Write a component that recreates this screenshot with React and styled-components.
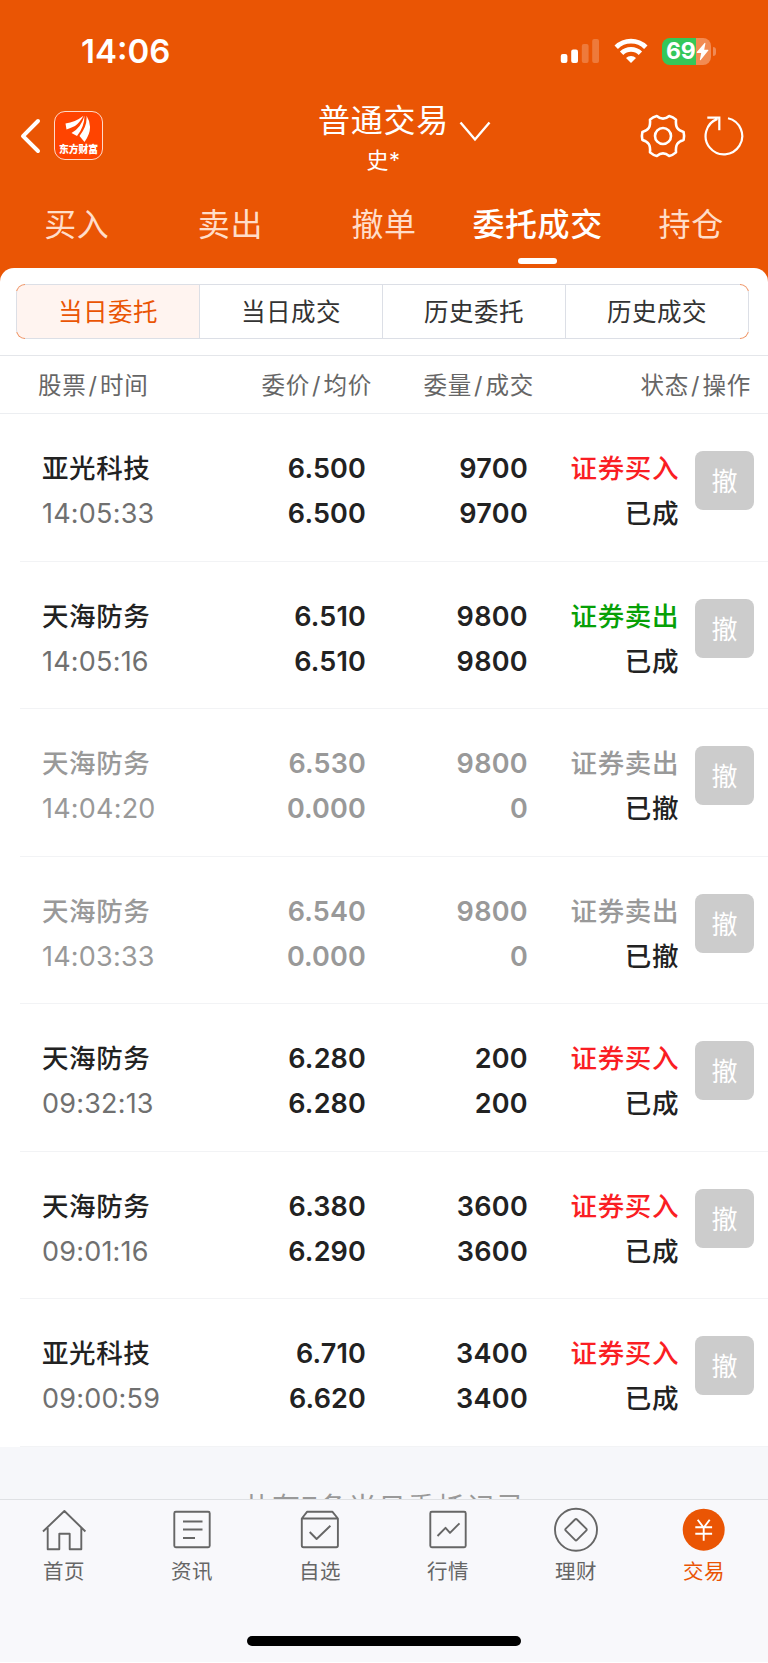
import styled, { createGlobalStyle } from "styled-components";

const orders = [
    { name: "亚光科技", time: "14:05:33", price: "6.500", avg: "6.500", qty: "9700", deal: "9700", side: "buy", status: "已成" },
    { name: "天海防务", time: "14:05:16", price: "6.510", avg: "6.510", qty: "9800", deal: "9800", side: "sell", status: "已成" },
    { name: "天海防务", time: "14:04:20", price: "6.530", avg: "0.000", qty: "9800", deal: "0", side: "sell", status: "已撤", canceled: true },
    { name: "天海防务", time: "14:03:33", price: "6.540", avg: "0.000", qty: "9800", deal: "0", side: "sell", status: "已撤", canceled: true },
    { name: "天海防务", time: "09:32:13", price: "6.280", avg: "6.280", qty: "200", deal: "200", side: "buy", status: "已成" },
    { name: "天海防务", time: "09:01:16", price: "6.380", avg: "6.290", qty: "3600", deal: "3600", side: "buy", status: "已成" },
    { name: "亚光科技", time: "09:00:59", price: "6.710", avg: "6.620", qty: "3400", deal: "3400", side: "buy", status: "已成" },
];

const tabs = ["买入", "卖出", "撤单", "委托成交", "持仓"];
const segments = ["当日委托", "当日成交", "历史委托", "历史成交"];
const columns = [
    ["股票", "时间"],
    ["委价", "均价"],
    ["委量", "成交"],
    ["状态", "操作"],
];

const navItems = [
    {
        label: "首页",
        icon: <path d="M3 25.5 24.4 5l21 20.5M7.7 22v21.3h11.6V27.7h10.4v15.6h11.6V22" />,
    },
    {
        label: "资讯",
        icon: <><rect x="6.3" y="5.8" width="35.4" height="35.4" rx="1.5" /><path d="M15 15.5h19.5M15 23.5h19.5M15 32h12" /></>,
    },
    {
        label: "自选",
        icon: <><path d="M5.8 12.5 11 5.8h25.5l5.4 6.7v27q0 1.7-1.7 1.7H7.5q-1.7 0-1.7-1.7zM5.8 12.5h36" /><path d="m13.7 26 6.9 7 13.8-13.3" /></>,
    },
    {
        label: "行情",
        icon: <><rect x="6.3" y="5.8" width="35.4" height="35.4" rx="1.5" /><path d="m13.5 30 8-8.2 4.5 5.1 9.5-9.6" /></>,
    },
    {
        label: "理财",
        icon: <><circle cx="24" cy="23.7" r="21" /><path d="M23 13.5q1-1 2 0l9.2 9.2q1 1 0 2L25 33.9q-1 1-2 0l-9.2-9.2q-1-1 0-2z" /></>,
    },
    {
        label: "交易",
        active: true,
        icon: <><circle cx="23.7" cy="23.7" r="21" fill="#ea5504" stroke="none" /><path stroke="#fff" d="m17.7 13.7 6 8 6-8M15.3 21.2h16.8M15.3 27.8h16.8M23.7 21.5v13.3" /></>,
    },
];

function Row({ order }) {
    return (
        <OrderRow $canceled={order.canceled}>
            <Cell $left>
                <strong>{order.name}</strong>
                <Time $canceled={order.canceled}>{order.time}</Time>
            </Cell>
            <Cell $num $spacing="0.15px">
                <strong>{order.price}</strong>
                <strong>{order.avg}</strong>
            </Cell>
            <Cell $num $spacing="0.3px">
                <strong>{order.qty}</strong>
                <strong>{order.deal}</strong>
            </Cell>
            <Cell>
                <Side $side={order.side} $canceled={order.canceled}>
                    {order.side === "buy" ? "证券买入" : "证券卖出"}
                </Side>
                <Status>{order.status}</Status>
            </Cell>
            <CancelButton>撤</CancelButton>
        </OrderRow>
    );
}

function StatusIcons() {
    return (
        <StatusRight>
            <svg width="40" height="26" viewBox="0 0 40 26" fill="#fff">
                <rect x="0.8" y="16" width="6.6" height="9" rx="2" />
                <rect x="11.2" y="11.4" width="6.8" height="13.6" rx="2" />
                <rect x="21.8" y="6" width="6.8" height="19" rx="2" opacity="0.22" />
                <rect x="32.2" y="1" width="6.8" height="24" rx="2" opacity="0.22" />
            </svg>
            <svg width="34" height="26" viewBox="0 0 34 26" fill="none" stroke="#fff" strokeWidth="4.8">
                <path d="M2.2 9.2a21 21 0 0 1 29.6 0" />
                <path d="M7.6 15.2a13.4 13.4 0 0 1 18.8 0" />
                <path d="m12 20 5 5 5-5a7 7 0 0 0-10 0z" fill="#fff" stroke="none" />
            </svg>
            <Battery>
                <BatteryBody>
                    69
                    <svg width="13" height="19" viewBox="0 0 13 18" fill="#fff">
                        <path d="M8.6 0.4 0.8 9.6q-.5.8.4.8h4L3.9 17q0 1 .8.4l7.6-9.3q.5-.9-.4-.9H8.2L9.4.9q0-1-.8-.5z" />
                    </svg>
                </BatteryBody>
                <BatteryTip />
            </Battery>
        </StatusRight>
    );
}

export default function App() {
    return (
        <Page>
            <GlobalStyle />
            <Header>
                <StatusBar>
                    <Clock>14:06</Clock>
                    <StatusIcons />
                </StatusBar>
                <TitleBar>
                    <HeaderSide>
                        <svg width="22" height="36" viewBox="0 0 22 36" fill="none" stroke="#fff" strokeWidth="4" strokeLinecap="round" strokeLinejoin="round">
                            <path d="M18 3 3 18.2 18 33" />
                        </svg>
                        <Logo>
                            <svg width="27" height="28" viewBox="0 0 27 28" fill="#fff">
                                <path d="M.5 8.500Q10 7.500 18.500.8 14.500 8 10 11 5 13 1.500 14.500z" />
                                <path d="M19.500.8Q16 13 6.500 18l5.500 3Q19.500 12 19.500.8z" />
                                <path d="M21.500.8Q22.500 11 14.500 21l5 6Q29.500 13 21.500.8z" />
                            </svg>
                            <span>东方财富</span>
                        </Logo>
                    </HeaderSide>
                    <Title>
                        <h1>普通交易</h1>
                        <p>史*</p>
                    </Title>
                    <Chevron width="32" height="22" viewBox="0 0 32 22" fill="none" stroke="#fff" strokeWidth="2.400">
                        <path d="m1.500 1.500 14.500 17 14.500-17" />
                    </Chevron>
                    <HeaderSide>
                        <svg width="46" height="46" viewBox="0 0 46 46" fill="none" stroke="#fff" strokeWidth="2.600" strokeLinejoin="round">
                            <path d="M16.800 3q6.200 5.400 12.400 0c2.500.6 4.800 1.800 6.800 3.600-.6 7.500 1.200 10.600 7.600 12.400q1 4 0 8c-6.400 1.800-8.200 4.900-7.600 12.400-2 1.800-4.300 3-6.800 3.600q-6.200-5.400-12.400 0c-2.500-.6-4.800-1.800-6.800-3.600.6-7.500-1.200-10.600-7.600-12.400q-1-4 0-8c6.400-1.800 8.200-4.900 7.600-12.400 2-1.800 4.300-3 6.800-3.600z" />
                            <circle cx="23" cy="23" r="8" />
                        </svg>
                        <svg width="42" height="42" viewBox="0 0 42 42" fill="none" stroke="#fff" strokeWidth="2.200">
                            <path d="M25 3.200A18.300 18.300 0 1 1 14.500 3.900M4.300 2.700h12v12.500" />
                        </svg>
                    </HeaderSide>
                </TitleBar>
                <Tabs>
                    {tabs.map((t) => (
                        <Tab key={t} $active={t === "委托成交"}>{t}</Tab>
                    ))}
                </Tabs>
            </Header>
            <Panel>
                <Segment>
                    {segments.map((s, i) => (
                        <SegmentItem key={s} $active={i === 0}>{s}</SegmentItem>
                    ))}
                </Segment>
                <TableHead>
                    {columns.map(([a, b]) => (
                        <span key={a}>{a}<i>/</i>{b}</span>
                    ))}
                </TableHead>
                {orders.map((o) => (
                    <Row key={o.time} order={o} />
                ))}
            </Panel>
            <Summary>共有7条当日委托记录</Summary>
            <BottomNav>
                <NavList>
                    {navItems.map((n) => (
                        <NavItem key={n.label} $active={n.active}>
                            <svg width="48" height="48" viewBox="0 0 48 48" fill="none" stroke="#666" strokeWidth="1.900" strokeLinejoin="round">
                                {n.icon}
                            </svg>
                            {n.label}
                        </NavItem>
                    ))}
                </NavList>
                <HomeIndicator />
            </BottomNav>
        </Page>
    );
}

const GlobalStyle = createGlobalStyle`
    * {
        box-sizing: border-box;
    }

    body {
        margin: 0;
        background: #fff;
        font-family: Inter, "Noto Sans CJK SC", sans-serif;
    }
`;

const Page = styled.div`
    width: 768px;
    height: 1663px;
    display: flex;
    flex-direction: column;
    overflow: hidden;
`;

const Header = styled.header`
    height: 284px;
    flex: none;
    margin-bottom: -16px;
    background: #ea5504;
    color: #fff;
`;

const StatusBar = styled.div`
    height: 102px;
    padding: 0 52px 0 81px;
    display: flex;
    justify-content: space-between;
    align-items: center;
`;

const Clock = styled.div`
    font-size: 33px;
    font-weight: 600;
`;

const StatusRight = styled.div`
    display: flex;
    align-items: center;
    gap: 14px;
`;

const Battery = styled.div`
    display: flex;
    align-items: center;
    gap: 2px;
`;

const BatteryBody = styled.div`
    width: 49px;
    height: 27px;
    padding-left: 4px;
    display: flex;
    align-items: center;
    gap: 1px;
    border-radius: 8px;
    background: linear-gradient(to right, #34c759 34px, #f28b52 34px);
    font-size: 23px;
    font-weight: 700;
    letter-spacing: -0.3px;

    svg {
        flex: none;
    }
`;

const BatteryTip = styled.div`
    width: 3px;
    height: 9px;
    border-radius: 0 4px 4px 0;
    background: #f08a55;
`;

const TitleBar = styled.div`
    height: 68px;
    padding: 0 22px 0 20px;
    display: grid;
    grid-template-columns: 1fr auto 1fr;
    align-items: center;
    position: relative;
`;

const HeaderSide = styled.div`
    display: flex;
    align-items: center;
    gap: 12px;
    padding-bottom: 7px;

    &:last-child {
        justify-content: flex-end;
        gap: 17px;
        padding-right: 1px;
        padding-bottom: 6px;
    }
`;

const Logo = styled.div`
    width: 49px;
    height: 49px;
    display: flex;
    flex-direction: column;
    align-items: center;
    padding-top: 3px;
    border: 1px solid #ffd9c8;
    border-radius: 11px;
    background: #ff4400;

    span {
        font-family: "Noto Sans CJK SC", sans-serif;
        font-size: 9.800px;
        font-weight: 900;
        line-height: 13px;
    }
`;

const Title = styled.div`
    padding: 0 0 1px 1px;
    text-align: center;

    h1 {
        margin: 0;
        font-size: 32px;
        font-weight: 400;
        line-height: 38px;
        letter-spacing: 0.800px;
    }

    p {
        margin: 5px 0 0;
        font-size: 22px;
        line-height: 30px;
        letter-spacing: 0.500px;
    }
`;

const Chevron = styled.svg`
    position: absolute;
    left: 459px;
    top: 19px;
`;

const Tabs = styled.nav`
    height: 98px;
    display: grid;
    grid-template-columns: repeat(5, 1fr);
`;

const Tab = styled.div`
    display: flex;
    flex-direction: column;
    align-items: center;
    padding-top: 32px;
    font-size: 32px;
    line-height: 46px;
    letter-spacing: 0.600px;
    font-weight: ${(p) => (p.$active ? 500 : 400)};
    color: ${(p) => (p.$active ? "#fff" : "#ffddc9")};

    &::after {
        content: "";
        width: 39px;
        height: 6px;
        margin-top: 10px;
        border-radius: 3px;
        background: ${(p) => (p.$active ? "#fff" : "transparent")};
    }
`;

const Panel = styled.main`
    flex: none;
    padding-top: 16px;
    border-radius: 14px 14px 0 0;
    background: #fff;
`;

/* grey edges, orange only in the rounded corners */
const Segment = styled.div`
    height: 55px;
    margin: 0 19px 16px 16px;
    display: grid;
    grid-template-columns: 182px 183px 183px 1fr;
    border: 1px solid transparent;
    border-radius: 9px;
    overflow: hidden;
    background:
        linear-gradient(#dcdfe6, #dcdfe6) center / calc(100% - 18px) 100% no-repeat border-box,
        linear-gradient(#dcdfe6, #dcdfe6) center / 100% calc(100% - 14px) no-repeat border-box,
        linear-gradient(#ee8f5e, #ee8f5e) border-box;
`;

const SegmentItem = styled.div`
    display: flex;
    align-items: center;
    justify-content: center;
    padding-bottom: 2px;
    font-size: 24.500px;
    letter-spacing: 0.500px;
    color: ${(p) => (p.$active ? "#ea5504" : "#333")};
    background: ${(p) => (p.$active ? "#fff4f0" : "#fff")};

    & + & {
        border-left: 1px solid #dcdfe6;
    }
`;

const TableHead = styled.div`
    height: 59px;
    padding: 0 17px 2px 38px;
    display: grid;
    grid-template-columns: 120px 214px 162px 1fr;
    align-items: center;
    text-align: right;
    white-space: nowrap;
    border-top: 1px solid #e4e6ea;
    border-bottom: 1px solid #eceef1;
    font-size: 23.500px;
    letter-spacing: 0.800px;
    color: #666;

    span:first-child {
        text-align: left;
    }

    i {
        margin: 0 2px;
        font-style: normal;
    }
`;

const OrderRow = styled.div`
    height: 147.500px;
    margin-left: 20px;
    padding: 32px 14px 0 22px;
    display: grid;
    grid-template-columns: 140px 184px 162px 151px 59px;
    border-bottom: 1px solid #f2f3f5;
    color: ${(p) => (p.$canceled ? "#999" : "#222")};

    & > :last-child {
        margin-left: 16px;
    }
`;

const Cell = styled.div`
    display: flex;
    flex-direction: column;
    align-items: ${(p) => (p.$left ? "flex-start" : "flex-end")};
    font-size: ${(p) => (p.$num ? 27 : 26.5)}px;
    line-height: 45px;
    letter-spacing: ${(p) => p.$spacing || "0.6px"};
    white-space: nowrap;

    strong {
        font-weight: ${(p) => (p.$num ? 600 : 500)};
    }
`;

const Time = styled.span`
    font-size: 27px;
    letter-spacing: 0.200px;
    color: ${(p) => (p.$canceled ? "#999" : "#707070")};
`;

const sideColors = { buy: "#fa1e23", sell: "#06a006" };

const Side = styled.span`
    font-weight: 500;
    color: ${(p) => (p.$canceled ? "#999" : sideColors[p.$side])};
`;

const Status = styled.span`
    font-weight: 500;
    color: #222;
`;

const CancelButton = styled.button`
    width: 59px;
    height: 59px;
    margin-top: 5.300px;
    padding: 0 0 2px;
    border: 0;
    border-radius: 8px;
    background: #ccc;
    color: #fff;
    font: 400 26px "Noto Sans CJK SC", sans-serif;
`;

const Summary = styled.div`
    height: 52px;
    flex: none;
    padding-top: 41px;
    overflow: hidden;
    background: #f6f7fa;
    text-align: center;
    font-size: 28px;
    line-height: 40px;
    letter-spacing: 1.500px;
    color: #999;
`;

const BottomNav = styled.footer`
    height: 163.500px;
    flex: none;
    border-top: 1px solid #dfe1e4;
    background: #f8f8fb;
`;

const NavList = styled.div`
    display: grid;
    grid-template-columns: repeat(6, 1fr);
`;

const NavItem = styled.div`
    padding-top: 6px;
    display: flex;
    flex-direction: column;
    align-items: center;
    font-size: 20.500px;
    line-height: 35px;
    letter-spacing: 0.600px;
    color: ${(p) => (p.$active ? "#ea5504" : "#666")};
`;

const HomeIndicator = styled.div`
    width: 274px;
    height: 10px;
    margin: 47px auto 0;
    border-radius: 5px;
    background: #000;
`;
